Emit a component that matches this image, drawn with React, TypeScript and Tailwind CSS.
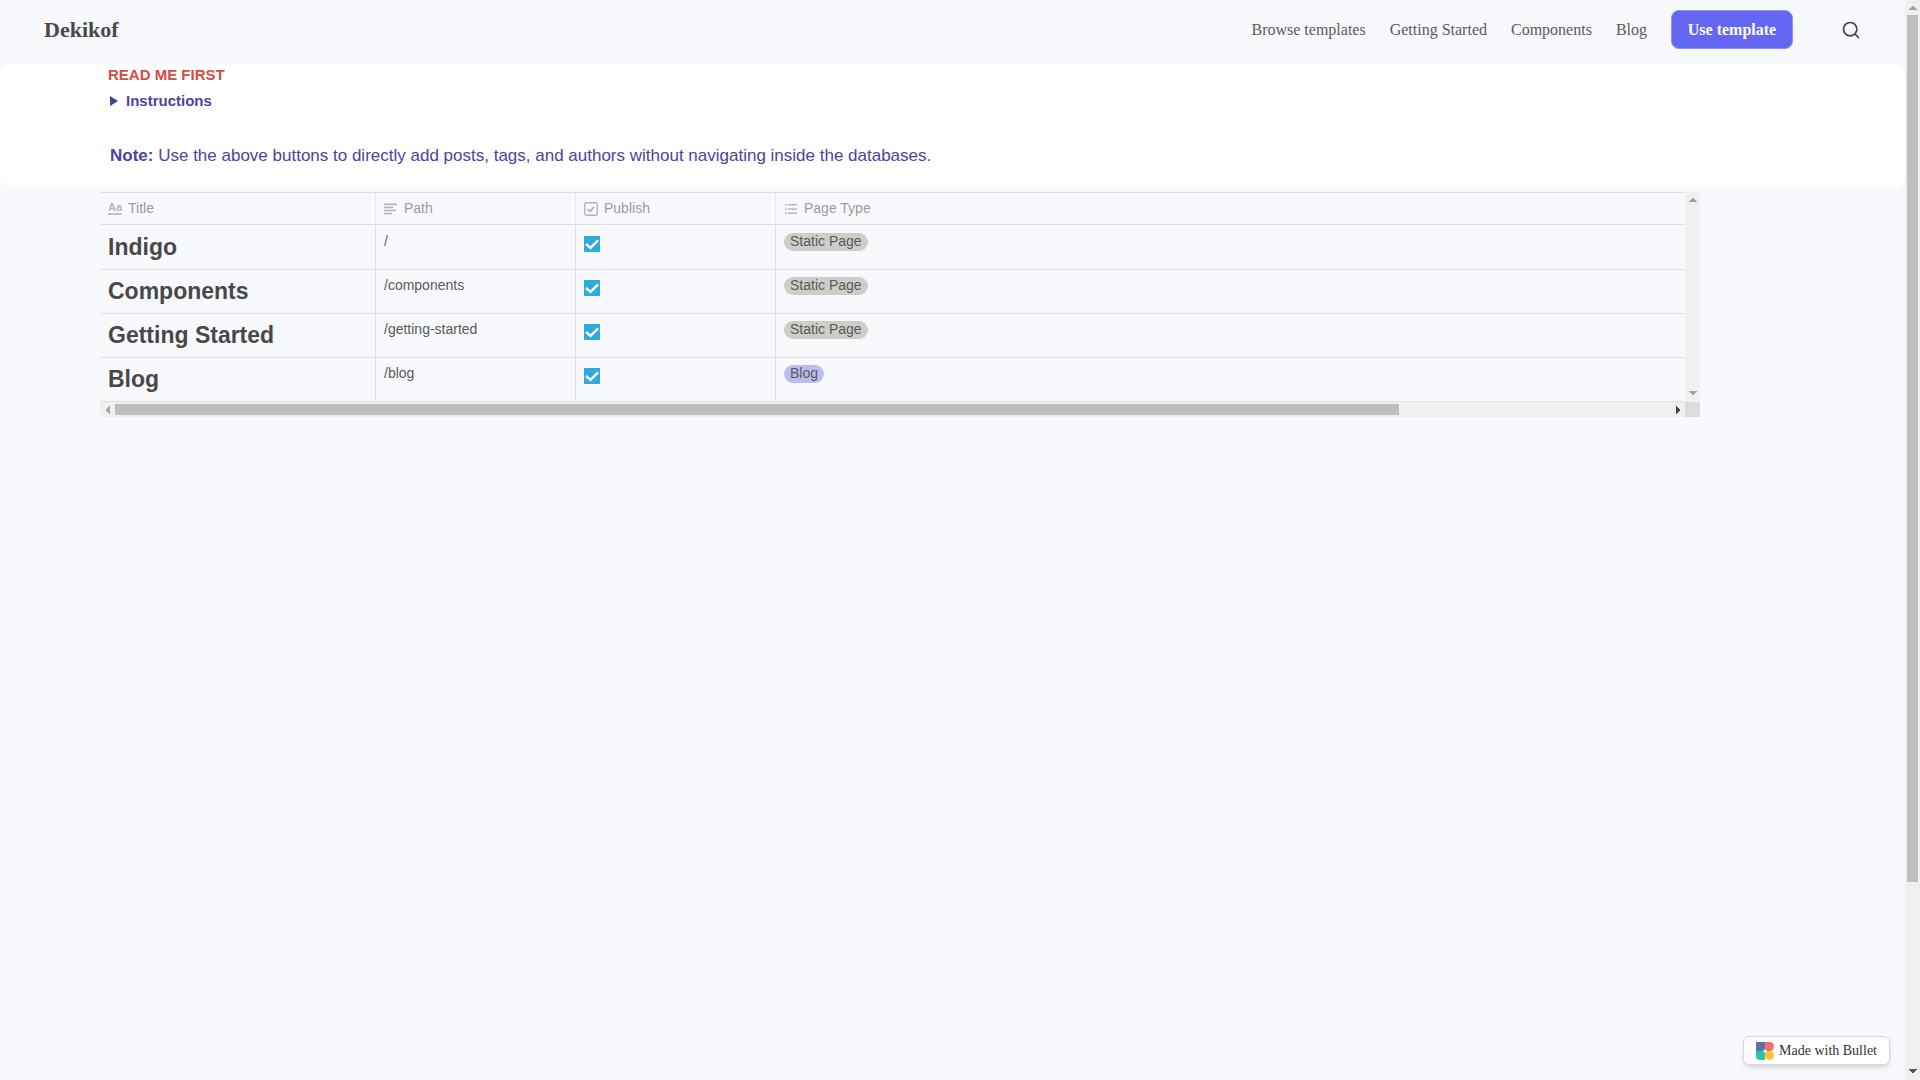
import { Search } from 'lucide-react';

const rows = [
  { title: 'Indigo', path: '/', tag: 'Static Page' },
  { title: 'Components', path: '/components', tag: 'Static Page' },
  { title: 'Getting Started', path: '/getting-started', tag: 'Static Page' },
  { title: 'Blog', path: '/blog', tag: 'Blog' },
];

const navLinks = ['Browse templates', 'Getting Started', 'Components', 'Blog'];

function Arrow({ dir, color = '#a3a3a3' }: { dir: 'up' | 'down' | 'left' | 'right'; color?: string }) {
  const points = {
    up: '4,1 8,6 0,6',
    down: '0,1 8,1 4,6',
    left: '6,0 6,8 1,4',
    right: '1,0 6,4 1,8',
  }[dir];
  return (
    <svg width="8" height="8" viewBox="0 0 8 8" shapeRendering="crispEdges">
      <polygon points={points} fill={color} />
    </svg>
  );
}

function PathIcon() {
  return (
    <svg width="13" height="12" viewBox="0 0 13 12" fill="#b4b4b4">
      <rect x="0" y="0.5" width="13" height="1.6" />
      <rect x="0" y="3.6" width="9" height="1.6" />
      <rect x="0" y="6.7" width="12" height="1.6" />
      <rect x="0" y="9.8" width="8" height="1.6" />
    </svg>
  );
}

function PublishIcon() {
  return (
    <svg width="14" height="14" viewBox="0 0 14 14" fill="none">
      <rect x="0.75" y="0.75" width="12.5" height="12.5" rx="2" stroke="#b4b4b4" strokeWidth="1.4" />
      <path d="M3.8 7.2l2.2 2.2 4.2-4.6" stroke="#b4b4b4" strokeWidth="1.8" />
    </svg>
  );
}

function ListIcon() {
  return (
    <svg width="12" height="10" viewBox="0 0 12 10" fill="#b4b4b4">
      <rect x="0" y="0" width="1.6" height="1.6" />
      <rect x="3" y="0" width="9" height="1.4" />
      <rect x="0" y="4.2" width="1.6" height="1.6" />
      <rect x="3" y="4.3" width="9" height="1.4" />
      <rect x="0" y="8.4" width="1.6" height="1.6" />
      <rect x="3" y="8.6" width="9" height="1.4" />
    </svg>
  );
}

function CheckBox() {
  return (
    <svg width="16" height="16" viewBox="0 0 16 16">
      <rect width="16" height="16" fill="#2eaadc" />
      <path d="M2 8l4.5 3.8 7.6-7.4" fill="none" stroke="#fff" strokeWidth="2.4" />
    </svg>
  );
}

function BulletLogo() {
  return (
    <svg width="18" height="18" viewBox="0 0 18 18">
      <path d="M0 0h9v9H0z" fill="#5a72ab" />
      <path d="M9 0h4.5a4.5 4.5 0 0 1 0 9H9z" fill="#f26f6c" />
      <path d="M0 9h9v9H4a4 4 0 0 1-4-4z" fill="#33bfae" />
      <path d="M9 9h4.5a4.5 4.5 0 0 1 0 9 4.5 4.5 0 0 1-4.5-4.5z" fill="#fdc436" />
      <path d="M9 6.5l.7 1.8 1.8.7-1.8.7-.7 1.8-.7-1.8-1.8-.7 1.8-.7z" fill="#fff" />
    </svg>
  );
}

export default function App() {
  return (
    <div className="flex h-screen overflow-hidden bg-[#f8f9fd] font-['Liberation_Sans',sans-serif]">
      <div className="relative min-w-0 flex-1">
        {/* Header */}
        <header className="flex h-16 items-center justify-between pb-[5px] pl-[44px] pr-[44px] font-['Liberation_Serif',serif]">
          <span className="text-[22px] font-bold text-[#484848]">Dekikof</span>
          <nav className="flex items-center">
            <div className="flex items-center gap-6 text-base text-[#5a5a5a]">
              {navLinks.map((link) => (
                <a key={link}>{link}</a>
              ))}
              <button className="h-[39px] w-[122px] rounded-lg border border-[#8f91f5] bg-[#6366f1] text-base font-bold text-white">
                Use template
              </button>
            </div>
            <Search className="ml-[48px] h-5 w-5 text-[#444444]" strokeWidth={2} />
          </nav>
        </header>

        {/* Read me card */}
        <section className="h-[124px] rounded-xl bg-white pl-[108px]">
          <p className="pt-[2px] text-[15px] font-bold leading-[18px] text-[#d94a45]">READ ME FIRST</p>
          <div className="ml-[2px] mt-[8px] flex items-center text-[15px] font-bold leading-[18px] text-[#4d43a1]">
            <span className="mr-2 h-0 w-0 border-y-[5px] border-l-[8px] border-y-transparent border-l-[#4a3f9f]" />
            Instructions
          </div>
          <p className="ml-[2px] mt-[36px] text-[17px] leading-[20px] text-[#4d43a1]">
            <b>Note:</b> Use the above buttons to directly add posts, tags, and authors without navigating inside the databases.
          </p>
        </section>

        {/* Embedded table */}
        <div className="ml-[100px] mt-1 flex h-[225px] w-[1600px]">
          <div className="flex min-w-0 flex-1 flex-col">
            <div className="flex h-[33px] border-y border-[#dfe1e6] text-sm text-[#9b9b9b]">
              <div className="flex w-[276px] items-center border-r border-[#e8e9ee] pl-2">
                <span className="mr-[6px] border-b-2 border-[#c4c4c4] text-[11px] font-bold leading-[11px] text-[#b4b4b4]">Aa</span>
                <span className="pb-[2px]">Title</span>
              </div>
              <div className="flex w-[200px] items-center border-r border-[#e8e9ee] pl-2">
                <span className="mr-[7px]"><PathIcon /></span>
                <span className="pb-[2px]">Path</span>
              </div>
              <div className="flex w-[200px] items-center border-r border-[#e8e9ee] pl-2">
                <span className="mr-[6px]"><PublishIcon /></span>
                <span className="pb-[2px]">Publish</span>
              </div>
              <div className="flex flex-1 items-center pl-[9px]">
                <span className="mr-[7px]"><ListIcon /></span>
                <span className="pb-[2px]">Page Type</span>
              </div>
            </div>
            <div className="pt-[1px]">
              {rows.map((row) => (
                <div key={row.title} className="flex h-[44px] border-b border-[#dfe1e6] text-sm text-[#5a5a5a]">
                  <div className="flex w-[276px] items-center border-r border-[#dfe1e6] pl-2 text-[23px] font-bold text-[#484848]">
                    {row.title}
                  </div>
                  <div className="w-[200px] border-r border-[#dfe1e6] pl-2 pt-[5px] leading-5">{row.path}</div>
                  <div className="w-[200px] border-r border-[#dfe1e6] pl-2 pt-[10px]">
                    <CheckBox />
                  </div>
                  <div className="flex-1 pl-2 pt-[7px]">
                    <span className={`block h-[18px] w-fit rounded-full px-[6px] leading-[17px] ${row.tag === 'Blog' ? 'bg-[#bdbaf1]' : 'bg-[#cfcdc8]'}`}>
                      {row.tag}
                    </span>
                  </div>
                </div>
              ))}
            </div>
            {/* Horizontal scrollbar */}
            <div className="flex h-[15px] items-center bg-[#f0f0f0]">
              <div className="flex w-[15px] justify-center"><Arrow dir="left" /></div>
              <div className="h-[11px] w-[1284px] bg-[#bebebe]" />
              <div className="flex flex-1 justify-end pr-[2px]"><Arrow dir="right" color="#444444" /></div>
            </div>
          </div>
          {/* Vertical scrollbar */}
          <div className="flex w-[15px] flex-col">
            <div className="flex flex-1 flex-col items-center justify-between bg-[#f0f0f0] py-1">
              <Arrow dir="up" />
              <Arrow dir="down" />
            </div>
            <div className="h-[15px] bg-[#dcdcdc]" />
          </div>
        </div>

        {/* Badge */}
        <div className="absolute bottom-[15px] right-[15px] flex h-[29px] w-[147px] items-center rounded-md border border-[#d5d9e6] bg-white pl-3 font-['Liberation_Serif',serif] text-sm text-[#333333] shadow-md">
          <span className="mr-[5px]"><BulletLogo /></span>
          Made with Bullet
        </div>
      </div>

      {/* Page scrollbar */}
      <div className="flex w-[15px] flex-col items-center bg-[#f0f0f0]">
        <div className="flex h-[15px] items-center"><Arrow dir="up" /></div>
        <div className="h-[867px] w-[11px] bg-[#bebebe]" />
        <div className="flex flex-1 items-end pb-1"><Arrow dir="down" color="#555555" /></div>
      </div>
    </div>
  );
}
